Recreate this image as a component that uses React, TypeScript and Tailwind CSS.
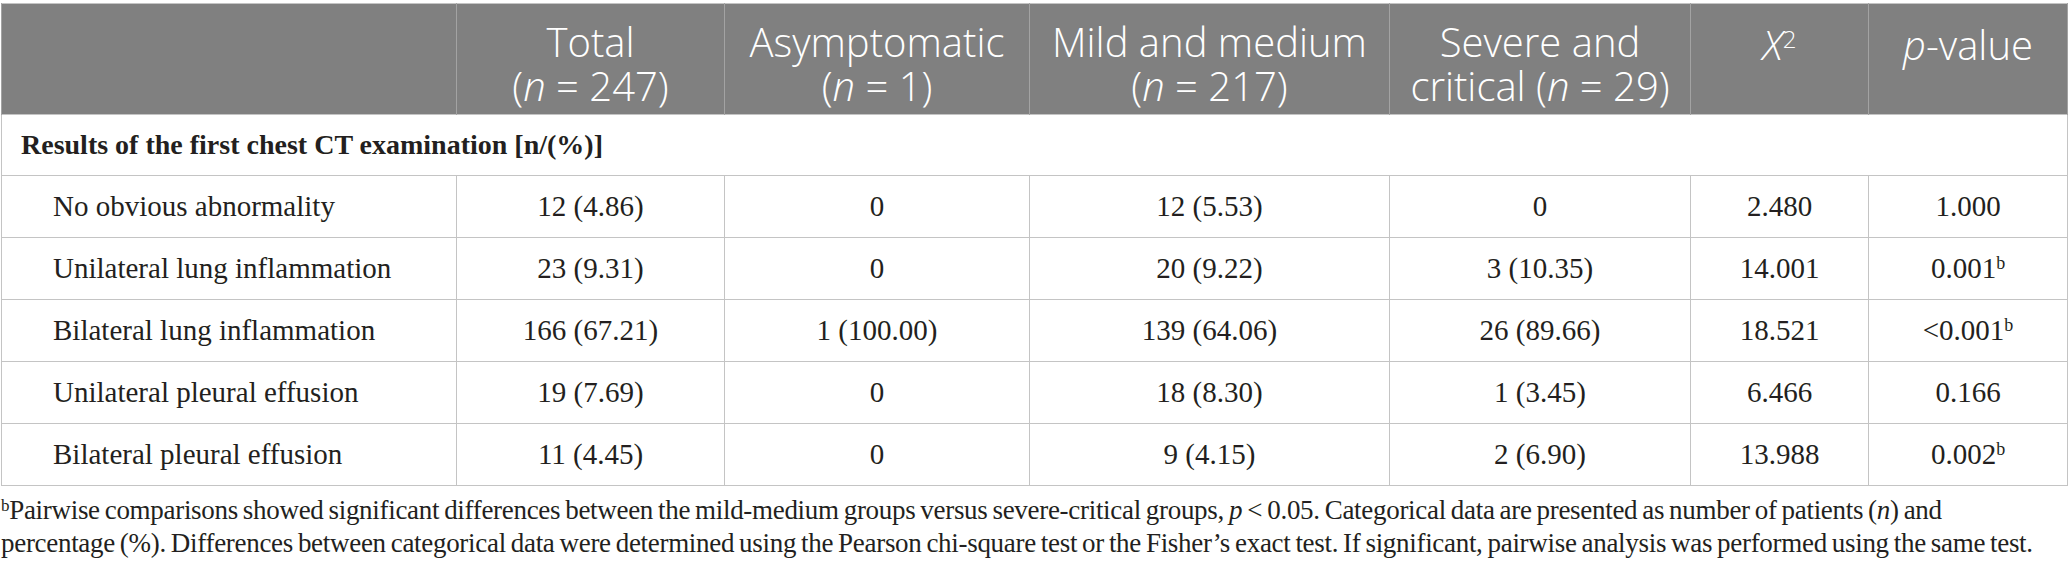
const rows = [
  { label: "No obvious abnormality", total: "12 (4.86)", asym: "0", mild: "12 (5.53)", severe: "0", chi: "2.480", p: "1.000", sig: false },
  { label: "Unilateral lung inflammation", total: "23 (9.31)", asym: "0", mild: "20 (9.22)", severe: "3 (10.35)", chi: "14.001", p: "0.001", sig: true },
  { label: "Bilateral lung inflammation", total: "166 (67.21)", asym: "1 (100.00)", mild: "139 (64.06)", severe: "26 (89.66)", chi: "18.521", p: "<0.001", sig: true },
  { label: "Unilateral pleural effusion", total: "19 (7.69)", asym: "0", mild: "18 (8.30)", severe: "1 (3.45)", chi: "6.466", p: "0.166", sig: false },
  { label: "Bilateral pleural effusion", total: "11 (4.45)", asym: "0", mild: "9 (4.15)", severe: "2 (6.90)", chi: "13.988", p: "0.002", sig: true },
];

const th = "border-x border-[#a3a3a3] px-1 pt-[10px] text-center align-middle font-light leading-[44px]";
const td = "border border-[#c4c4c4] text-center align-middle";

export default function App() {
  return (
    <div className="min-h-[572px] w-[2068px] overflow-hidden bg-white pl-px pt-[3px] text-[#231f20]">
      <table className="w-[2066px] table-fixed border-collapse border border-[#c4c4c4] font-['Liberation_Serif',serif] text-[29px]">
        <colgroup>
          <col className="w-[455px]" />
          <col className="w-[268px]" />
          <col className="w-[305px]" />
          <col className="w-[360px]" />
          <col className="w-[301px]" />
          <col className="w-[178px]" />
          <col className="w-[199px]" />
        </colgroup>
        <thead>
          <tr className="h-[111px] bg-[#808080] font-['Open_Sans',sans-serif] text-[40px] text-white">
            <th className={th}></th>
            <th className={th}>
              Total
              <br />(<i>n</i> = 247)
            </th>
            <th className={th}>
              Asymptomatic
              <br />(<i>n</i> = 1)
            </th>
            <th className={th}>
              Mild and medium
              <br />(<i>n</i> = 217)
            </th>
            <th className={th}>
              Severe and
              <br />critical (<i>n</i> = 29)
            </th>
            <th className={`${th} align-top pt-[19px]`}>
              <i>X</i>
              <sup className="text-[24px]">2</sup>
            </th>
            <th className={`${th} align-top pt-[19px]`}>
              <i>p</i>-value
            </th>
          </tr>
        </thead>
        <tbody>
          <tr className="h-[61px]">
            <td colSpan={7} className="border border-[#c4c4c4] pl-[19px] text-left align-middle text-[28px] font-bold">
              Results of the first chest CT examination [n/(%)]
            </td>
          </tr>
          {rows.map((r) => (
            <tr key={r.label} className="h-[62px]">
              <td className="border border-[#c4c4c4] pl-[51px] text-left align-middle">{r.label}</td>
              <td className={td}>{r.total}</td>
              <td className={td}>{r.asym}</td>
              <td className={td}>{r.mild}</td>
              <td className={td}>{r.severe}</td>
              <td className={td}>{r.chi}</td>
              <td className={td}>
                {r.p}
                {r.sig && <sup className="text-[18px]">b</sup>}
              </td>
            </tr>
          ))}
        </tbody>
      </table>
      <p className="mt-[8px] whitespace-nowrap font-['Liberation_Serif',serif] text-[27px] leading-[33px] tracking-[-0.3px] [word-spacing:-1.5px]">
        <sup className="text-[17px]">b</sup>Pairwise comparisons showed significant differences between the mild-medium groups versus severe-critical groups, <i>p</i>
        {"\u2009"}&lt;{"\u2009"}0.05. Categorical data are presented as number of patients (<i>n</i>) and
        <br />
        percentage (%). Differences between categorical data were determined using the Pearson chi-square test or the Fisher’s exact test. If significant, pairwise analysis was performed using the same test.
      </p>
    </div>
  );
}
